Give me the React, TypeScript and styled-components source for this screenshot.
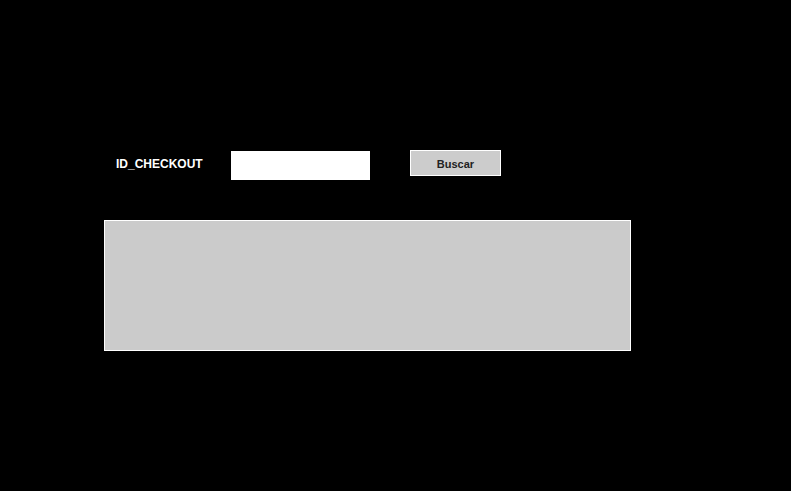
import styled, { createGlobalStyle } from 'styled-components';

const GlobalStyle = createGlobalStyle`
	html, body {
		margin: 0;
		padding: 0;
		background: #000;
	}

	body {
		font-family: "Liberation Sans", Arial, sans-serif;
	}
`;

const Page = styled.div`
	width: 791px;
	height: 491px;
	background: #000;
	padding: 150px 0 0 104px;
	box-sizing: border-box;
`;

const SearchRow = styled.form`
	display: flex;
	align-items: flex-start;
	height: 30px;
	margin: 0 0 0 12px;
`;

const Label = styled.label`
	width: 115px;
	color: #fff;
	font-size: 12px;
	font-weight: bold;
	line-height: 29px;
`;

const Input = styled.input`
	width: 139px;
	height: 29px;
	margin: 1px 0 0;
	padding: 0 4px;
	box-sizing: border-box;
	border: none;
	outline: none;
	background: #fff;
	font-family: inherit;
	font-size: 12px;
`;

const Button = styled.button`
	width: 91px;
	height: 26px;
	margin-left: 40px;
	padding: 2px 0 0;
	border: 1px solid #fff;
	background: #ccc;
	color: #222;
	font-family: inherit;
	font-size: 11px;
	font-weight: bold;
	cursor: pointer;
`;

const Results = styled.div`
	width: 527px;
	height: 131px;
	margin-top: 40px;
	box-sizing: border-box;
	border: 1px solid #fff;
	background: #cbcbcb;
`;

export default function App() {
	return (
		<>
			<GlobalStyle />
			<Page>
				<SearchRow onSubmit={(e) => e.preventDefault()}>
					<Label htmlFor="id-checkout">ID_CHECKOUT</Label>
					<Input id="id-checkout" type="text" />
					<Button type="submit">Buscar</Button>
				</SearchRow>
				<Results />
			</Page>
		</>
	);
}
